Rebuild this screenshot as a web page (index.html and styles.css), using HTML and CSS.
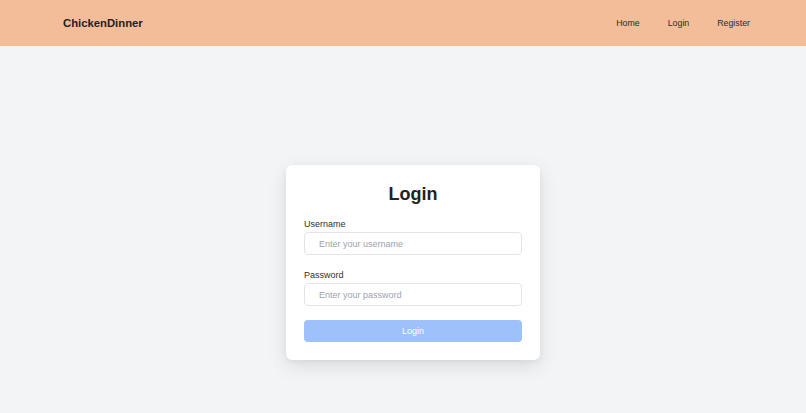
FILE: index.html
```html
<!doctype html>
<html>
  <head>
    <meta charset="UTF-8" />
    <meta name="viewport" content="width=device-width, initial-scale=1">
    <title>ChickenDinner - Login</title>
    <link rel="stylesheet" href="styles.css">
  </head>
  <body>
    <header class="topbar">
      <a class="brand" href="#">ChickenDinner</a>
      <nav class="nav">
        <a href="#">Home</a>
        <a href="#">Login</a>
        <a href="#">Register</a>
      </nav>
    </header>
    <main class="page">
      <form class="card" id="login">
        <h1>Login</h1>
        <div class="field">
          <label for="username">Username</label>
          <input type="text" id="username" name="username" placeholder="Enter your username" />
        </div>
        <div class="field">
          <label for="password">Password</label>
          <input type="password" id="password" name="password" placeholder="Enter your password" />
        </div>
        <button type="submit" class="btn" disabled>Login</button>
      </form>
    </main>
  </body>
</html>
```

FILE: styles.css
```css
* {
  box-sizing: border-box;
}
html, body {
  margin: 0;
  height: 100%;
}
body {
  font-family: "Liberation Sans", Arial, sans-serif;
  background-color: #f3f4f6;
  color: #1f2937;
  overflow: hidden;
}
a {
  color: inherit;
  text-decoration: none;
}

.topbar {
  height: 46px;
  padding: 0 56px 0 63px;
  background-color: #f4bd99;
  display: flex;
  align-items: center;
  justify-content: space-between;
}
.brand {
  font-size: 11.3px;
  font-weight: bold;
  color: #222;
}
.nav {
  display: flex;
  gap: 28px;
  font-size: 8.8px;
  color: #2b2b2b;
}

.page {
  display: flex;
  justify-content: center;
  padding: 119px 0 0 20px;
}
.card {
  width: 254px;
  padding: 18px 18px 18px;
  background: #fff;
  border-radius: 6px;
  box-shadow: 0 6px 20px rgba(0, 0, 0, 0.1), 0 2px 5px rgba(0, 0, 0, 0.05);
}
.card h1 {
  margin: 0 0 13px;
  font-size: 18px;
  line-height: 23px;
  text-align: center;
  color: #222;
}
.field {
  margin-bottom: 15px;
}
.field + .field {
  margin-bottom: 14px;
}
.field label {
  display: block;
  font-size: 9px;
  line-height: 11px;
  margin-bottom: 2px;
  color: #2f2f2f;
}
.field input {
  display: block;
  width: 100%;
  height: 23px;
  padding: 0 14px;
  border: 1px solid #e2e4e8;
  border-radius: 4px;
  font-family: inherit;
  font-size: 9px;
  color: #1f2937;
  outline: none;
}
.field input::placeholder {
  color: #9ca3af;
}
.btn {
  display: block;
  width: 100%;
  height: 22px;
  border: 0;
  border-radius: 4px;
  background-color: #9dc1fa;
  color: #fff;
  font-family: inherit;
  font-size: 9px;
}
```
